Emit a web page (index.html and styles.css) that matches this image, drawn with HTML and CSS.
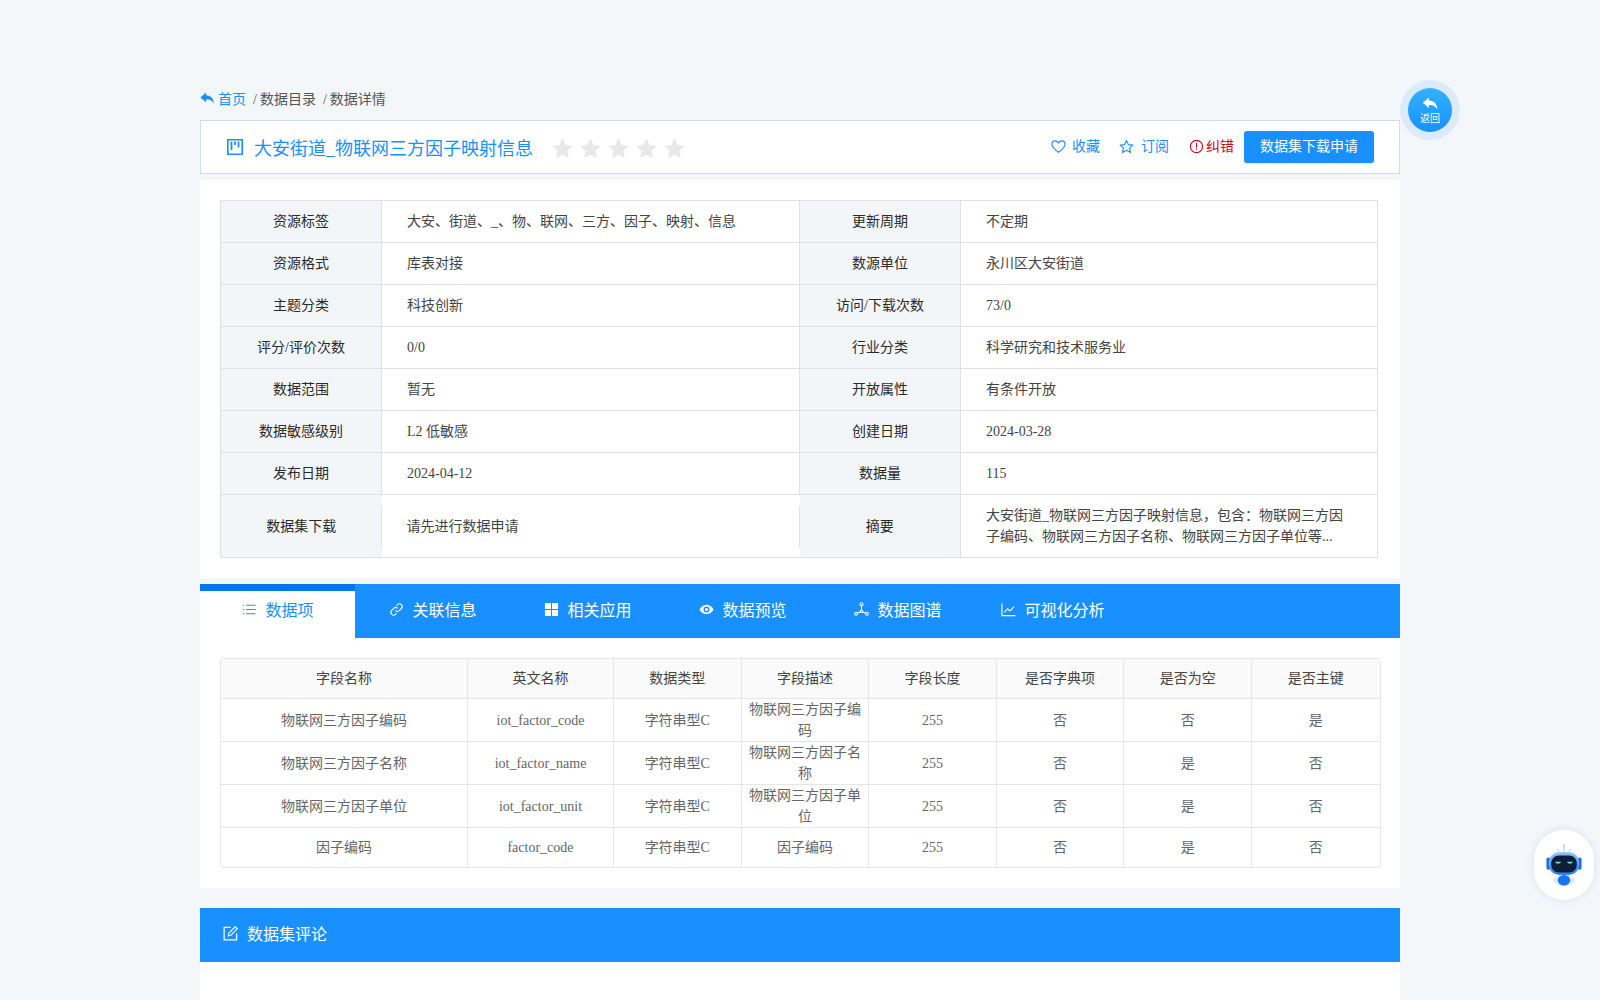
FILE: index.html
```html
<!DOCTYPE html>
<html lang="zh-CN">
<head>
    <meta charset="UTF-8">
    <title>数据详情</title>
    <link rel="stylesheet" href="styles.css">
</head>
<body>
    <div class="page">
        <div class="crumb">
            <svg class="crumb-icon" viewBox="0 0 16 14"><path d="M6.5 0.5 0.3 5.800 6.500 11V7.900c3.600-.1 6.300.8 8.200 4.600C14.600 7.200 11.800 3.900 6.500 3.600z" fill="#1890ff"/></svg>
            <a class="crumb-home">首页</a>
            <span class="crumb-sep">/</span><span>数据目录</span>
            <span class="crumb-sep">/</span><span>数据详情</span>
        </div>

        <div class="title-bar">
            <svg class="title-icon" viewBox="0 0 16 16"><path d="M.8.8h14.400v14.400H.8z" fill="none" stroke="#1890ff" stroke-width="1.600"/><path d="M3.600 2.500h1.800v8.500H3.600zM7.100 2.500h1.800v3.500H7.100zM10.600 2.500h1.800v6H10.600z" fill="#1890ff"/></svg>
            <h1 class="title-text">大安街道_物联网三方因子映射信息</h1>
            <div class="stars">
                <svg viewBox="0 0 20 20"><use href="#star"/></svg>
                <svg viewBox="0 0 20 20"><use href="#star"/></svg>
                <svg viewBox="0 0 20 20"><use href="#star"/></svg>
                <svg viewBox="0 0 20 20"><use href="#star"/></svg>
                <svg viewBox="0 0 20 20"><use href="#star"/></svg>
            </div>
            <div class="title-actions">
                <a class="action action-fav">
                    <svg viewBox="0 0 16 16"><path d="M8 14.200C3.500 10.800 1 8.300 1 5.500 1 3.400 2.600 2 4.400 2 5.800 2 7.200 2.800 8 4.200 8.800 2.800 10.200 2 11.600 2 13.400 2 15 3.400 15 5.500 15 8.300 12.500 10.800 8 14.200z" fill="none" stroke="#1890ff" stroke-width="1.200"/></svg>
                    收藏
                </a>
                <a class="action action-sub">
                    <svg viewBox="0 0 16 16"><path d="M8 1.500 10 6l4.800.5-3.600 3.200 1 4.800L8 12l-4.200 2.500 1-4.800L1.200 6.500 6 6z" fill="none" stroke="#1890ff" stroke-width="1.200" stroke-linejoin="round"/></svg>
                    订阅
                </a>
                <a class="action action-err">
                    <svg viewBox="0 0 16 16"><circle cx="8" cy="8" r="6.500" fill="none" stroke="#d4021d" stroke-width="1.200"/><path d="M7.400 4h1.200v5.200H7.400zM7.400 10.400h1.200v1.300H7.400z" fill="#d4021d"/></svg>
                    纠错
                </a>
                <button class="apply-btn">数据集下载申请</button>
            </div>
        </div>

        <section class="panel info-panel">
            <table class="info-table">
                <colgroup>
                    <col class="col-label"><col class="col-left"><col class="col-label"><col class="col-right">
                </colgroup>
                <tr><th>资源标签</th><td>大安、街道、_、物、联网、三方、因子、映射、信息</td><th>更新周期</th><td>不定期</td></tr>
                <tr><th>资源格式</th><td>库表对接</td><th>数源单位</th><td>永川区大安街道</td></tr>
                <tr><th>主题分类</th><td>科技创新</td><th>访问/下载次数</th><td>73/0</td></tr>
                <tr><th>评分/评价次数</th><td>0/0</td><th>行业分类</th><td>科学研究和技术服务业</td></tr>
                <tr><th>数据范围</th><td>暂无</td><th>开放属性</th><td>有条件开放</td></tr>
                <tr><th>数据敏感级别</th><td>L2 低敏感</td><th>创建日期</th><td>2024-03-28</td></tr>
                <tr><th>发布日期</th><td>2024-04-12</td><th>数据量</th><td>115</td></tr>
                <tr class="info-tall">
                    <th class="no-right">数据集下载</th>
                    <td class="no-side"><div class="short-line">请先进行数据申请</div></td>
                    <th class="no-side">摘要</th>
                    <td class="summary">大安街道_物联网三方因子映射信息，包含：物联网三方因子编码、物联网三方因子名称、物联网三方因子单位等...</td>
                </tr>
            </table>
        </section>

        <nav class="tabs">
            <a class="tab tab-active">
                <svg viewBox="0 0 16 16"><path d="M4.500 3h10v1.100h-10zM4.500 7.500h10v1.100h-10zM4.500 12h10v1.100h-10zM1 3h1.400v1.100H1zM1 7.500h1.400v1.100H1zM1 12h1.400v1.100H1z" fill="#1890ff"/></svg>
                数据项
            </a>
            <a class="tab">
                <svg viewBox="0 0 16 16"><path d="M6.700 9.300a3 3 0 0 0 4.200 0l2.500-2.500a3 3 0 0 0-4.200-4.200L8 3.800M9.300 6.700a3 3 0 0 0-4.200 0L2.600 9.200a3 3 0 0 0 4.200 4.200L8 12.200" fill="none" stroke="#fff" stroke-width="1.200"/></svg>
                关联信息
            </a>
            <a class="tab">
                <svg viewBox="0 0 16 16"><path d="M1 1h6.400v6.400H1zM8.600 1H15v6.400H8.600zM1 8.600h6.400V15H1zM8.600 8.600H15V15H8.600z" fill="#fff"/></svg>
                相关应用
            </a>
            <a class="tab">
                <svg viewBox="0 0 16 16"><path d="M8 3C4.500 3 1.800 5.400.5 8c1.300 2.600 4 5 7.500 5s6.200-2.400 7.500-5C14.200 5.400 11.500 3 8 3zm0 8.200A3.200 3.200 0 1 1 8 4.800a3.200 3.200 0 0 1 0 6.400zM8 6.300a1.700 1.700 0 1 0 0 3.400 1.700 1.700 0 0 0 0-3.400z" fill="#fff"/></svg>
                数据预览
            </a>
            <a class="tab">
                <svg viewBox="0 0 16 16"><g fill="none" stroke="#fff" stroke-width="1.100"><circle cx="8" cy="2.500" r="1.600"/><circle cx="2.200" cy="12.500" r="1.500"/><circle cx="13.800" cy="12.500" r="1.500"/><circle cx="8" cy="9.800" r="1.300"/><path d="M8 4.100v4.400M6.900 10.500 3.600 12M9.100 10.500 12.400 12"/></g></svg>
                数据图谱
            </a>
            <a class="tab">
                <svg viewBox="0 0 16 16"><path d="M1 1.500V14.500H15.500" fill="none" stroke="#fff" stroke-width="1.200"/><path d="M3.500 11 7 7.200l2.500 2.300L14 5" fill="none" stroke="#fff" stroke-width="1.200"/></svg>
                可视化分析
            </a>
        </nav>

        <section class="panel fields-panel">
            <table class="fields-table">
                <colgroup>
                    <col class="col-name"><col class="col-en"><col class="col-std"><col class="col-std"><col class="col-std"><col class="col-std"><col class="col-std"><col class="col-std">
                </colgroup>
                <tr><th>字段名称</th><th>英文名称</th><th>数据类型</th><th>字段描述</th><th>字段长度</th><th>是否字典项</th><th>是否为空</th><th>是否主键</th></tr>
                <tr><td>物联网三方因子编码</td><td>iot_factor_code</td><td>字符串型C</td><td>物联网三方因子编码</td><td>255</td><td>否</td><td>否</td><td>是</td></tr>
                <tr><td>物联网三方因子名称</td><td>iot_factor_name</td><td>字符串型C</td><td>物联网三方因子名称</td><td>255</td><td>否</td><td>是</td><td>否</td></tr>
                <tr><td>物联网三方因子单位</td><td>iot_factor_unit</td><td>字符串型C</td><td>物联网三方因子单位</td><td>255</td><td>否</td><td>是</td><td>否</td></tr>
                <tr class="row-short"><td>因子编码</td><td>factor_code</td><td>字符串型C</td><td>因子编码</td><td>255</td><td>否</td><td>是</td><td>否</td></tr>
            </table>
        </section>

        <div class="comment-head">
            <svg viewBox="0 0 16 16"><path d="M8 1.500H1.200v13.300h13.300V8" fill="none" stroke="#fff" stroke-width="1.300"/><path d="M13 .8 15.200 3 8.500 9.800l-2.800.6.600-2.800z" fill="none" stroke="#fff" stroke-width="1.200"/></svg>
            数据集评论
        </div>
        <div class="comment-body"></div>
    </div>

    <a class="back-btn">
        <span class="back-inner">
            <svg viewBox="0 0 16 14"><path d="M6.500 .5 .3 5.800 6.500 11V7.900c3.600-.1 6.300.8 8.200 4.600C14.600 7.200 11.800 3.900 6.500 3.600z" fill="#fff"/></svg>
            <span class="back-text">返回</span>
        </span>
    </a>

    <a class="robot-btn">
        <svg viewBox="0 0 40 44">
            <defs>
                <linearGradient id="helmet" x1="0" y1="0" x2="0" y2="1"><stop offset="0" stop-color="#8fc4f7"/><stop offset="1" stop-color="#2f80ea"/></linearGradient>
            </defs>
            <rect x="19.500" y="0" width="1.200" height="4" fill="#e8a8a8"/>
            <path d="M13 5l2 4M27 5l-2 4M20 4v5" stroke="#a9c8ee" stroke-width="1"/>
            <rect x="1.500" y="14" width="4" height="13" rx="2" fill="#1f6fe0"/>
            <rect x="34.500" y="14" width="4" height="13" rx="2" fill="#1f6fe0"/>
            <rect x="4" y="8.500" width="32" height="24" rx="11" fill="url(#helmet)"/>
            <rect x="6.500" y="12" width="27" height="18" rx="8" fill="#0f1d3a"/>
            <path d="M10.500 18.500h6.500l-1.500 2h-3.500zM23 18.500h6.500l-1.500 2h-3.500z" fill="#5fe3e0"/>
            <ellipse cx="20" cy="38" rx="11" ry="5.500" fill="#dbe9fa"/>
            <ellipse cx="20" cy="38" rx="6.500" ry="5.500" fill="#1a73f0"/>
        </svg>
    </a>

    <svg class="defs">
        <symbol id="star" viewBox="0 0 20 20"><path d="M10 1.500l2.600 5.700 6.100.7-4.500 4.200 1.200 6.100L10 15.200l-5.400 3 1.200-6.100-4.500-4.200 6.100-.7z" fill="#e8e8e8" stroke="#e8e8e8" stroke-width="1" stroke-linejoin="round"/></symbol>
    </svg>
</body>
</html>
```

FILE: styles.css
```css
* {
    box-sizing: border-box;
}
html, body {
    margin: 0;
    padding: 0;
}
body {
    font-family: "Liberation Serif", "Noto Sans CJK SC", serif;
    font-size: 14px;
    line-height: 20px;
    color: #333;
    background-color: #f4f7fa;
}
.defs {
    display: none;
}
.page {
    width: 1200px;
    margin-left: 200px;
    padding-top: 90px;
}

.crumb {
    display: flex;
    align-items: center;
    height: 20px;
    color: #555;
}
.crumb-icon {
    width: 15px;
    height: 13px;
    margin: 0 3px 3px 0;
}
.crumb-home {
    color: #1890ff;
}
.crumb-sep {
    margin: 0 3px 0 7px;
}

.title-bar {
    display: flex;
    align-items: center;
    height: 54px;
    margin-top: 10px;
    padding: 0 25px 0 26px;
    background: #fff;
    border: 1px solid #d0dcea;
}
.title-icon {
    width: 16px;
    height: 16px;
    margin-right: 11px;
}
.title-text {
    margin: 3px 0 0;
    font-size: 18px;
    line-height: 24px;
    font-weight: normal;
    color: #1890ff;
}
.stars {
    display: flex;
    gap: 7px;
    margin: 2px 0 0 19px;
}
.stars svg {
    width: 21px;
    height: 21px;
}
.title-actions {
    display: flex;
    align-items: center;
    margin-left: auto;
}
.action {
    display: flex;
    align-items: center;
    color: #1890ff;
}
.action svg {
    width: 15px;
    height: 15px;
    margin: 0 6px 2px 0;
}
.action-fav {
    margin-right: 19px;
}
.action-sub {
    margin-right: 20px;
}
.action-sub svg {
    margin-right: 7px;
}
.action-err {
    margin-right: 10px;
    color: #d4021d;
}
.action-err svg {
    margin-right: 2px;
}
.apply-btn {
    width: 130px;
    height: 32px;
    font-family: inherit;
    font-size: 14px;
    line-height: 20px;
    color: #fff;
    background-color: #1890ff;
    border: none;
    border-radius: 3px;
    box-shadow: 0 1px 2px rgba(0, 0, 0, 0.1);
}

.panel {
    background: #fff;
    padding: 20px;
}
.info-panel {
    margin-top: 6px;
    height: 398px;
}
.info-table {
    width: 1157px;
    border-collapse: collapse;
    table-layout: fixed;
}
.col-label {
    width: 161px;
}
.col-left {
    width: 418px;
}
.col-right {
    width: 417px;
}
.info-table th, .info-table td {
    height: 42px;
    border: 1px solid #dfe1e4;
}
.info-table th {
    font-weight: normal;
    color: #2a2a2a;
    background-color: #f3f6f9;
}
.info-table td {
    padding: 0 25px;
    color: #444;
}
.info-tall th, .info-tall td {
    height: 63px;
    line-height: 21px;
}
.info-tall .no-right {
    border-right: none;
}
.info-tall .no-side {
    border-left: none;
    border-right: none;
    padding: 0;
}
.short-line {
    display: flex;
    align-items: center;
    height: 41px;
    margin-left: -1px;
    padding: 0 25px;
    border-left: 1px solid #dfe1e4;
    border-right: 1px solid #dfe1e4;
}

.tabs {
    display: flex;
    height: 54px;
    margin-top: 6px;
    background-color: #1890ff;
}
.tab {
    display: flex;
    align-items: center;
    justify-content: center;
    width: 155px;
    padding-left: 1px;
    font-size: 16px;
    color: #fff;
}
.tab svg {
    width: 15px;
    height: 15px;
    margin: 0 8px 3px 0;
}
.tab-active {
    color: #1890ff;
    background-color: #fff;
    border-top: 7px solid #0077e6;
    padding-bottom: 7px;
}

.fields-panel {
    height: 250px;
}
.fields-table {
    width: 1158.500px;
    border-collapse: separate;
    border-spacing: 0;
    table-layout: fixed;
    border: 1px solid #e6e6e6;
    border-radius: 3px;
    color: #666;
}
.col-name {
    width: 247px;
}
.col-en {
    width: 146px;
}
.col-std {
    width: 127.600px;
}
.fields-table th, .fields-table td {
    height: 43px;
    padding: 0 5px;
    text-align: center;
    line-height: 21px;
    border-right: 1px solid #e6e6e6;
    border-bottom: 1px solid #e6e6e6;
}
.fields-table th {
    height: 40px;
    font-weight: normal;
    color: #444;
    background-color: #fafafa;
}
.fields-table th:last-child, .fields-table td:last-child {
    border-right: none;
}
.fields-table tr:last-child td {
    border-bottom: none;
}
.fields-table .row-short td {
    height: 39px;
}

.comment-head {
    display: flex;
    align-items: center;
    height: 54px;
    margin-top: 20px;
    padding-left: 23px;
    font-size: 16px;
    color: #fff;
    background-color: #1890ff;
}
.comment-head svg {
    width: 15px;
    height: 15px;
    margin: 0 9px 3px 0;
}
.comment-body {
    height: 38px;
    background: #fff;
}

.back-btn {
    position: fixed;
    left: 1400px;
    top: 80px;
    display: flex;
    align-items: center;
    justify-content: center;
    width: 60px;
    height: 60px;
    border-radius: 50%;
    background-color: #dcebfb;
}
.back-inner {
    display: flex;
    flex-direction: column;
    align-items: center;
    justify-content: center;
    width: 44px;
    height: 44px;
    border-radius: 50%;
    background: linear-gradient(#32b2ff, #1890ff);
}
.back-inner svg {
    width: 17px;
    height: 14px;
}
.back-text {
    margin-top: 2px;
    font-size: 10px;
    line-height: 11px;
    color: #fff;
}
.robot-btn {
    position: fixed;
    left: 1534px;
    top: 830px;
    display: flex;
    align-items: center;
    justify-content: center;
    width: 60px;
    height: 70px;
    border-radius: 30px;
    background: #fff;
    box-shadow: 0 0 10px rgba(30, 80, 140, 0.12);
}
.robot-btn svg {
    width: 38px;
    height: 42px;
}
```
